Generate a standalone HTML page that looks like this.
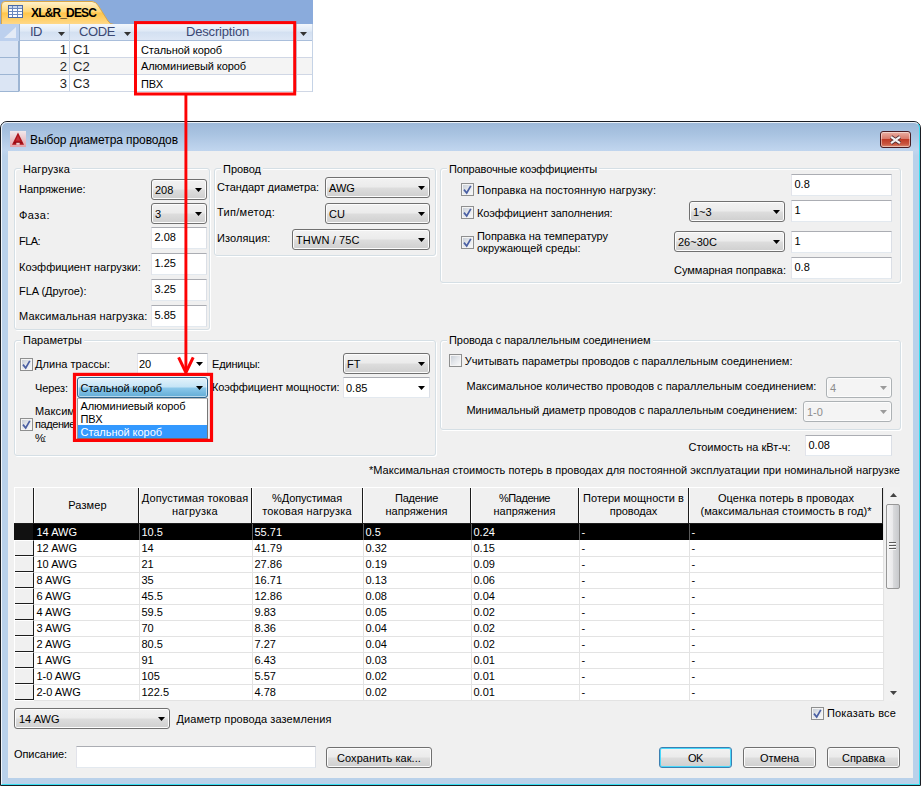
<!DOCTYPE html>
<html lang="ru"><head><meta charset="utf-8"><title>Выбор диаметра проводов</title>
<style>
html,body{margin:0;padding:0;background:#fff;}
body{width:921px;height:786px;position:relative;overflow:hidden;font-family:"Liberation Sans",sans-serif;font-size:11px;}
div,span.t,div.t{position:absolute;box-sizing:border-box;}
.t{white-space:nowrap;}
.t span{position:static;}
#acc{left:0;top:0;width:313px;height:92px;}
.acbar{background:#8aabdc;}
.achd{background:linear-gradient(#f3f7fc,#dfe9f6 45%,#d3e0f1 50%,#dde7f5);border-bottom:1px solid #a9bedb;}
.acrow{border-bottom:1px solid #d0d7e5;}
.acsel{background:#dbe5f4;border-right:1px solid #9db5d3;border-bottom:1px solid #9db5d3;}
#win{left:0;top:121px;width:921px;height:665px;border-radius:7px 7px 0 0;background:linear-gradient(#9cb8d8 0,#a9c3e1 12px,#c0d5ee 28px,#b9d1ea 34px,#b9d1ea 100%);border:1px solid #1a1e24;}
#winin{left:0;top:0;right:0;bottom:0;border-radius:6px 6px 0 0;border:1px solid rgba(255,255,255,.8);border-right-color:#37dff2;border-bottom-color:#37dff2;}
.client{background:#f0f0f0;}
.close{left:880px;top:131px;width:31px;height:17px;border-radius:3px;background:linear-gradient(#e9b0a4,#d9796a 46%,#bf3b26 50%,#c9553f 80%,#dc8a70);border:1px solid #4a1c22;box-shadow:inset 0 0 0 1px rgba(255,255,255,.45);}
.gb{border:1px solid #d5dfe5;border-radius:3px;box-shadow:inset 1px 1px 0 #fff, 1px 1px 0 #fff;}
.cb{border:1px solid #707070;border-radius:3px;background:linear-gradient(#f2f2f2,#ebebeb 48%,#dddddd 52%,#cfcfcf);box-shadow:inset 0 0 0 1px #fcfcfc;}
.cb.cd{border-color:#adb2b5;background:#f4f4f4;}
.cb.cf{border-color:#2c628b;background:linear-gradient(#e3f2fb,#c4e4f6 48%,#8cc8ea 52%,#62acd6);box-shadow:inset 0 0 0 1px rgba(255,255,255,.55);}
.ce{border:1px solid #e3e9ef;border-top-color:#abadb3;border-left-color:#e2e3ea;border-right-color:#dbdfe6;background:#fff;}
.ar{position:absolute;right:4px;top:50%;margin-top:-2px;}
.ed{border:1px solid #e3e9ef;border-top-color:#abadb3;border-left-color:#e2e3ea;border-right-color:#dbdfe6;background:#fff;}
.ck{border:1px solid #8e8f8f;background:linear-gradient(135deg,#c3cad3,#e4e7eb 50%,#fbfbfb);box-shadow:inset 0 0 0 1px #f4f4f4;}
.ck svg{position:absolute;left:-1px;top:-1px;}
.dd{border:1px solid #777;border-top-color:#bbb;border-left-color:#999;background:#fff;}
.bt{border:1px solid #707070;border-radius:3px;background:linear-gradient(#f2f2f2,#ebebeb 48%,#dddddd 52%,#cfcfcf);box-shadow:inset 0 0 0 1px #fcfcfc;}
.bt.bd{border-color:#3c7fb1;box-shadow:inset 0 0 0 1px #48d8fb;}
.grid{background:#fff;}
.ghd{background:#f0f0f0;}
.rh{background:#f0f0f0;border-right:1px solid #1c1c1c;border-bottom:1px solid #1c1c1c;border-top:1px solid #fff;}
.sb{background:#f1f1f1;}
.sbt{border:1px solid #979797;border-radius:2px;background:linear-gradient(90deg,#f5f5f5,#e9e9eb 48%,#d9dadc 52%,#c7c9cc);}
</style></head>
<body>
<div class="acbar" style="left:0px;top:0px;width:313px;height:24px;"></div>
<svg style="position:absolute;left:0;top:0" width="120" height="25" viewBox="0 0 120 25">
<defs><linearGradient id="tg" x1="0" y1="0" x2="0" y2="1"><stop offset="0" stop-color="#fff3cf"/><stop offset="0.45" stop-color="#ffd675"/><stop offset="0.5" stop-color="#ffc64a"/><stop offset="1" stop-color="#ffd98a"/></linearGradient></defs>
<path d="M1.5 24.5V5q0-3.5 3.5-3.5H92q4 0 6.5 4.5L108 21q2 3.500 6 3.500z" fill="url(#tg)" stroke="#d9a74a" stroke-width="1"/></svg>
<svg style="position:absolute;left:8px;top:5px" width="15" height="13" viewBox="0 0 15 13"><rect x="0.5" y="0.5" width="14" height="12" fill="#fdfdfe" stroke="#4a6aa5"/><rect x="1" y="1" width="13" height="2.5" fill="#c9d6ec"/><path d="M1 3.5h13M1 6.5h13M1 9.5h13M4.500 1v11M9.500 1v11" stroke="#6b88bd" stroke-width="1"/></svg>
<span class="t" id="t0" style="top:5.0px;font-size:12px;line-height:16px;color:#000;font-weight:bold;letter-spacing:-0.854px;left:31px;">XL&amp;R_DESC</span>
<div class="achd" style="left:0px;top:24px;width:313px;height:17px;"></div>
<svg style="position:absolute;left:0;top:24px" width="20" height="17" viewBox="0 0 20 17"><rect width="19" height="17" fill="#bcd0ee"/><path d="M16 3v11H4z" fill="#e4ebf6"/><path d="M19.500 0v17" stroke="#9db5d3"/></svg>
<div class="acrow" style="left:0px;top:41px;width:313px;height:17px;background:#fff;"></div>
<div class="acsel" style="left:0px;top:41px;width:19px;height:17px;"></div>
<div class="acrow" style="left:0px;top:58px;width:313px;height:17px;background:#f4f4f4;"></div>
<div class="acsel" style="left:0px;top:58px;width:19px;height:17px;"></div>
<div class="acrow" style="left:0px;top:75px;width:313px;height:17px;background:#fff;"></div>
<div class="acsel" style="left:0px;top:75px;width:19px;height:17px;"></div>
<div class="" style="left:69px;top:24px;width:1px;height:67px;position:absolute;background:#c5d3e6;"></div>
<div class="" style="left:136px;top:24px;width:1px;height:67px;position:absolute;background:#c5d3e6;"></div>
<div class="" style="left:296px;top:24px;width:1px;height:67px;position:absolute;background:#c5d3e6;"></div>
<div class="" style="left:19px;top:24px;width:1px;height:67px;position:absolute;background:#9db5d3;"></div>
<div class="" style="left:312px;top:24px;width:1px;height:68px;position:absolute;background:#c5d3e6;"></div>
<span class="t" id="t1" style="top:24.0px;font-size:13px;line-height:16px;color:#3b4874;letter-spacing:-0.500px;left:30px;">ID</span>
<span class="t" id="t2" style="top:24.0px;font-size:13px;line-height:16px;color:#3b4874;letter-spacing:-0.391px;left:79px;">CODE</span>
<span class="t" id="t3" style="top:24.0px;font-size:13px;line-height:16px;color:#3b4874;letter-spacing:-0.185px;left:186px;">Description</span>
<svg style="position:absolute;left:58px;top:32px" width="7" height="4" viewBox="0 0 7 4"><path d="M0 0h7L3.500 4z" fill="#333"/></svg>
<svg style="position:absolute;left:124px;top:32px" width="7" height="4" viewBox="0 0 7 4"><path d="M0 0h7L3.500 4z" fill="#333"/></svg>
<svg style="position:absolute;left:300px;top:32px" width="7" height="4" viewBox="0 0 7 4"><path d="M0 0h7L3.500 4z" fill="#333"/></svg>
<span class="t" id="t4" style="top:42.0px;font-size:13px;line-height:16px;color:#222;right:854px;">1</span>
<span class="t" id="t5" style="top:42.0px;font-size:13px;line-height:16px;color:#222;left:73px;">C1</span>
<span class="t" id="t6" style="top:42.0px;font-size:11px;line-height:16px;color:#000;letter-spacing:-0.079px;left:141px;">Стальной короб</span>
<span class="t" id="t7" style="top:59.0px;font-size:13px;line-height:16px;color:#222;right:854px;">2</span>
<span class="t" id="t8" style="top:59.0px;font-size:13px;line-height:16px;color:#222;left:73px;">C2</span>
<span class="t" id="t9" style="top:58.0px;font-size:11px;line-height:16px;color:#000;letter-spacing:-0.086px;left:141px;">Алюминиевый короб</span>
<span class="t" id="t10" style="top:76.0px;font-size:13px;line-height:16px;color:#222;right:854px;">3</span>
<span class="t" id="t11" style="top:76.0px;font-size:13px;line-height:16px;color:#222;left:73px;">C3</span>
<span class="t" id="t12" style="top:76.0px;font-size:11px;line-height:16px;color:#000;letter-spacing:-0.036px;left:141px;">ПВХ</span>
<div id="win"><div id="winin"></div></div>
<div class="client" style="left:8px;top:151px;width:905px;height:627px;"></div>
<svg style="position:absolute;left:10px;top:131px" width="16" height="16" viewBox="0 0 16 16"><defs><linearGradient id="ig" x1="0" y1="0" x2="0" y2="1"><stop offset="0" stop-color="#f1e9ec"/><stop offset="1" stop-color="#e3a3aa"/></linearGradient></defs><rect width="16" height="16" fill="url(#ig)"/><path d="M8 1.600L14 13.800H2z" fill="#ad121a"/><path d="M8 4.500L10.300 9.800H5.700z" fill="#c4323a"/><path d="M4 11h8l.5 1h-9z" fill="#8f0e15"/><rect x="6.300" y="11.800" width="3.400" height="2" fill="#ecd3d6"/></svg>
<span class="t" id="t13" style="top:131.5px;font-size:12px;line-height:16px;color:#000;letter-spacing:-0.079px;left:30px;">Выбор диаметра проводов</span>
<div class="close"><svg width="13" height="10" viewBox="0 0 13 10" style="position:absolute;left:8px;top:2.500px"><path d="M2 1.800L11 8.200M11 1.800L2 8.200" stroke="#4d2b30" stroke-width="3.800" stroke-linecap="butt"/><path d="M2 1.800L11 8.200M11 1.800L2 8.200" stroke="#f4f4f4" stroke-width="2.200" stroke-linecap="butt"/></svg></div>
<div class="gb" style="left:14px;top:168px;width:196px;height:162px;"></div>
<span class="t" id="t14" style="top:161.5px;font-size:11px;line-height:14px;color:#000;letter-spacing:0.150px;left:23px;background:#f0f0f0;padding:0 2px;margin-left:-2px;">Нагрузка</span>
<span class="t" id="t15" style="top:182.0px;font-size:11px;line-height:14px;color:#000;letter-spacing:-0.031px;left:19px;">Напряжение:</span>
<div class="cb" style="left:151px;top:179px;width:56px;height:21px;"><svg class="ar" width="7" height="4" viewBox="0 0 7 4"><path d="M0 0h7L3.5 4z" fill="#000"/></svg></div>
<span class="t" id="t16" style="top:182.5px;font-size:11px;line-height:14px;color:#000;left:155px;">208</span>
<span class="t" id="t17" style="top:208.0px;font-size:11px;line-height:14px;color:#000;letter-spacing:0.484px;left:19px;">Фаза:</span>
<div class="cb" style="left:151px;top:203px;width:56px;height:21px;"><svg class="ar" width="7" height="4" viewBox="0 0 7 4"><path d="M0 0h7L3.5 4z" fill="#000"/></svg></div>
<span class="t" id="t18" style="top:206.5px;font-size:11px;line-height:14px;color:#000;left:155px;">3</span>
<span class="t" id="t19" style="top:234.0px;font-size:11px;line-height:14px;color:#000;letter-spacing:-0.559px;left:19px;">FLA:</span>
<div class="ed" style="left:151px;top:227px;width:56px;height:22px;"></div>
<span class="t" id="t20" style="top:229.5px;font-size:11px;line-height:14px;color:#000;left:154.5px;">2.08</span>
<span class="t" id="t21" style="top:260.0px;font-size:11px;line-height:14px;color:#000;letter-spacing:-0.008px;left:19px;">Коэффициент нагрузки:</span>
<div class="ed" style="left:151px;top:253px;width:56px;height:22px;"></div>
<span class="t" id="t22" style="top:255.5px;font-size:11px;line-height:14px;color:#000;left:154.5px;">1.25</span>
<span class="t" id="t23" style="top:284.0px;font-size:11px;line-height:14px;color:#000;letter-spacing:-0.036px;left:19px;">FLA (Другое):</span>
<div class="ed" style="left:151px;top:279px;width:56px;height:22px;"></div>
<span class="t" id="t24" style="top:281.5px;font-size:11px;line-height:14px;color:#000;left:154.5px;">3.25</span>
<span class="t" id="t25" style="top:309.0px;font-size:11px;line-height:14px;color:#000;letter-spacing:0.114px;left:19px;">Максимальная нагрузка:</span>
<div class="ed" style="left:151px;top:305px;width:56px;height:22px;"></div>
<span class="t" id="t26" style="top:307.5px;font-size:11px;line-height:14px;color:#000;left:154.5px;">5.85</span>
<div class="gb" style="left:214px;top:168px;width:222px;height:88px;"></div>
<span class="t" id="t27" style="top:161.5px;font-size:11px;line-height:14px;color:#000;letter-spacing:-0.026px;left:223px;background:#f0f0f0;padding:0 2px;margin-left:-2px;">Провод</span>
<span class="t" id="t28" style="top:180.0px;font-size:11px;line-height:14px;color:#000;letter-spacing:-0.105px;left:217px;">Стандарт диаметра:</span>
<div class="cb" style="left:325px;top:177px;width:105px;height:21px;"><svg class="ar" width="7" height="4" viewBox="0 0 7 4"><path d="M0 0h7L3.5 4z" fill="#000"/></svg></div>
<span class="t" id="t29" style="top:180.5px;font-size:11px;line-height:14px;color:#000;left:329px;">AWG</span>
<span class="t" id="t30" style="top:205.0px;font-size:11px;line-height:14px;color:#000;letter-spacing:0.302px;left:217px;">Тип/метод:</span>
<div class="cb" style="left:325px;top:203px;width:105px;height:21px;"><svg class="ar" width="7" height="4" viewBox="0 0 7 4"><path d="M0 0h7L3.5 4z" fill="#000"/></svg></div>
<span class="t" id="t31" style="top:206.5px;font-size:11px;line-height:14px;color:#000;left:329px;">CU</span>
<span class="t" id="t32" style="top:231.0px;font-size:11px;line-height:14px;color:#000;letter-spacing:0.106px;left:217px;">Изоляция:</span>
<div class="cb" style="left:292px;top:229px;width:138px;height:21px;"><svg class="ar" width="7" height="4" viewBox="0 0 7 4"><path d="M0 0h7L3.5 4z" fill="#000"/></svg></div>
<span class="t" id="t33" style="top:232.5px;font-size:11px;line-height:14px;color:#000;letter-spacing:0.116px;left:296px;">THWN / 75C</span>
<div class="gb" style="left:440px;top:168px;width:461px;height:115px;"></div>
<span class="t" id="t34" style="top:161.5px;font-size:11px;line-height:14px;color:#000;letter-spacing:-0.133px;left:449px;background:#f0f0f0;padding:0 2px;margin-left:-2px;">Поправочные коэффициенты</span>
<div class="ck" style="left:461px;top:183.0px;width:13px;height:13.0px;"><svg width="13" height="13" viewBox="0 0 13 13"><path d="M3 6.6L5.7 10L9.8 2.8" stroke="#4a5fa3" stroke-width="1.7" fill="none"/></svg></div>
<span class="t" id="t35" style="top:182.5px;font-size:11px;line-height:14px;color:#000;letter-spacing:0.053px;left:477px;">Поправка на постоянную нагрузку:</span>
<div class="ed" style="left:791px;top:174px;width:101px;height:22px;"></div>
<span class="t" id="t36" style="top:176.5px;font-size:11px;line-height:14px;color:#000;left:794.5px;">0.8</span>
<div class="ck" style="left:461px;top:206.0px;width:13px;height:13.0px;"><svg width="13" height="13" viewBox="0 0 13 13"><path d="M3 6.6L5.7 10L9.8 2.8" stroke="#4a5fa3" stroke-width="1.7" fill="none"/></svg></div>
<span class="t" id="t37" style="top:206.0px;font-size:11px;line-height:14px;color:#000;letter-spacing:-0.107px;left:477px;">Коэффициент заполнения:</span>
<div class="cb" style="left:689px;top:201px;width:96px;height:21px;"><svg class="ar" width="7" height="4" viewBox="0 0 7 4"><path d="M0 0h7L3.5 4z" fill="#000"/></svg></div>
<span class="t" id="t38" style="top:204.5px;font-size:11px;line-height:14px;color:#000;left:693px;">1~3</span>
<div class="ed" style="left:791px;top:200px;width:101px;height:22px;"></div>
<span class="t" id="t39" style="top:202.5px;font-size:11px;line-height:14px;color:#000;left:794.5px;">1</span>
<div class="ck" style="left:461px;top:236.0px;width:13px;height:13.0px;"><svg width="13" height="13" viewBox="0 0 13 13"><path d="M3 6.6L5.7 10L9.8 2.8" stroke="#4a5fa3" stroke-width="1.7" fill="none"/></svg></div>
<span class="t" id="t40" style="top:228.7px;font-size:11px;line-height:14px;color:#000;letter-spacing:-0.054px;left:477px;">Поправка на температуру</span>
<span class="t" id="t41" style="top:241.0px;font-size:11px;line-height:14px;color:#000;letter-spacing:0.006px;left:477px;">окружающей среды:</span>
<div class="cb" style="left:674px;top:231px;width:111px;height:21px;"><svg class="ar" width="7" height="4" viewBox="0 0 7 4"><path d="M0 0h7L3.5 4z" fill="#000"/></svg></div>
<span class="t" id="t42" style="top:234.5px;font-size:11px;line-height:14px;color:#000;left:678px;">26~30C</span>
<div class="ed" style="left:791px;top:231px;width:101px;height:22px;"></div>
<span class="t" id="t43" style="top:233.5px;font-size:11px;line-height:14px;color:#000;left:794.5px;">1</span>
<span class="t" id="t44" style="top:262.5px;font-size:11px;line-height:14px;color:#000;letter-spacing:-0.012px;left:674px;">Суммарная поправка:</span>
<div class="ed" style="left:791px;top:257px;width:101px;height:22px;"></div>
<span class="t" id="t45" style="top:259.5px;font-size:11px;line-height:14px;color:#000;left:794.5px;">0.8</span>
<div class="gb" style="left:14px;top:340px;width:422px;height:116px;"></div>
<span class="t" id="t46" style="top:333.0px;font-size:11px;line-height:14px;color:#000;letter-spacing:0.040px;left:23px;background:#f0f0f0;padding:0 2px;margin-left:-2px;">Параметры</span>
<div class="ck" style="left:20px;top:358.0px;width:13px;height:13.0px;"><svg width="13" height="13" viewBox="0 0 13 13"><path d="M3 6.6L5.7 10L9.8 2.8" stroke="#4a5fa3" stroke-width="1.7" fill="none"/></svg></div>
<span class="t" id="t47" style="top:356.7px;font-size:11px;line-height:14px;color:#000;letter-spacing:0.038px;left:35px;">Длина трассы:</span>
<div class="ce" style="left:137px;top:353px;width:71px;height:21px;"><svg class="ar" width="7" height="4" viewBox="0 0 7 4"><path d="M0 0h7L3.5 4z" fill="#000"/></svg></div>
<span class="t" id="t48" style="top:356.5px;font-size:11px;line-height:14px;color:#000;left:139px;">20</span>
<span class="t" id="t49" style="top:357.0px;font-size:11px;line-height:14px;color:#000;letter-spacing:-0.174px;left:212px;">Единицы:</span>
<div class="cb" style="left:343px;top:353px;width:87px;height:21px;"><svg class="ar" width="7" height="4" viewBox="0 0 7 4"><path d="M0 0h7L3.5 4z" fill="#000"/></svg></div>
<span class="t" id="t50" style="top:356.5px;font-size:11px;line-height:14px;color:#000;left:347px;">FT</span>
<span class="t" id="t51" style="top:380.5px;font-size:11px;line-height:14px;color:#000;letter-spacing:-0.091px;left:35px;">Через:</span>
<div class="cb cf" style="left:77px;top:377px;width:131px;height:21px;"><svg class="ar" width="7" height="4" viewBox="0 0 7 4"><path d="M0 0h7L3.5 4z" fill="#000"/></svg></div>
<span class="t" id="t52" style="top:380.5px;font-size:11px;line-height:14px;color:#000;letter-spacing:-0.044px;left:80.5px;">Стальной короб</span>
<span class="t" id="t53" style="top:380.0px;font-size:11px;line-height:14px;color:#000;letter-spacing:-0.109px;left:212px;">Коэффициент мощности:</span>
<div class="ce" style="left:343px;top:377px;width:87px;height:21px;"><svg class="ar" width="7" height="4" viewBox="0 0 7 4"><path d="M0 0h7L3.5 4z" fill="#000"/></svg></div>
<span class="t" id="t54" style="top:380.5px;font-size:11px;line-height:14px;color:#000;left:346px;">0.85</span>
<span class="t" id="t55" style="top:403.5px;font-size:11px;line-height:14px;color:#000;letter-spacing:0.073px;left:35px;">Максим</span>
<span class="t" id="t56" style="top:417.0px;font-size:11px;line-height:14px;color:#000;letter-spacing:-0.422px;left:35px;">падение</span>
<span class="t" id="t57" style="top:430.5px;font-size:11px;line-height:14px;color:#000;letter-spacing:-1.422px;left:35px;">%:</span>
<div class="ck" style="left:20px;top:418.0px;width:13px;height:13.0px;"><svg width="13" height="13" viewBox="0 0 13 13"><path d="M3 6.6L5.7 10L9.8 2.8" stroke="#4a5fa3" stroke-width="1.7" fill="none"/></svg></div>
<div class="dd" style="left:77px;top:398px;width:131px;height:41px;"></div>
<span class="t" id="t58" style="top:398.5px;font-size:11px;line-height:14px;color:#000;letter-spacing:-0.086px;left:80.5px;">Алюминиевый короб</span>
<span class="t" id="t59" style="top:411.5px;font-size:11px;line-height:14px;color:#000;letter-spacing:-0.036px;left:80.5px;">ПВХ</span>
<div class="" style="left:78px;top:425px;width:129px;height:13px;position:absolute;background:#3399ff;"></div>
<span class="t" id="t60" style="top:425.0px;font-size:11px;line-height:14px;color:#fff;letter-spacing:-0.044px;left:80.5px;">Стальной короб</span>
<div class="gb" style="left:440px;top:340px;width:461px;height:90px;"></div>
<span class="t" id="t61" style="top:333.0px;font-size:11px;line-height:14px;color:#000;letter-spacing:-0.068px;left:449px;background:#f0f0f0;padding:0 2px;margin-left:-2px;">Провода с параллельным соединением</span>
<div class="ck" style="left:449px;top:354.0px;width:13px;height:13.0px;"></div>
<span class="t" id="t62" style="top:354.3px;font-size:11px;line-height:14px;color:#000;letter-spacing:-0.001px;left:464.8px;">Учитывать параметры проводов с параллельным соединением:</span>
<span class="t" id="t63" style="top:379.0px;font-size:11px;line-height:14px;color:#000;letter-spacing:-0.010px;left:466.4px;">Максимальное количество проводов с параллельным соединением:</span>
<div class="cb cd" style="left:826px;top:377px;width:66px;height:21px;"><svg class="ar" width="7" height="4" viewBox="0 0 7 4"><path d="M0 0h7L3.5 4z" fill="#9a9a9a"/></svg></div>
<span class="t" id="t64" style="top:380.5px;font-size:11px;line-height:14px;color:#8c8c8c;left:830px;">4</span>
<span class="t" id="t65" style="top:403.0px;font-size:11px;line-height:14px;color:#000;letter-spacing:-0.045px;left:466.4px;">Минимальный диаметр проводов с параллельным соединением:</span>
<div class="cb cd" style="left:803px;top:401px;width:89px;height:21px;"><svg class="ar" width="7" height="4" viewBox="0 0 7 4"><path d="M0 0h7L3.5 4z" fill="#9a9a9a"/></svg></div>
<span class="t" id="t66" style="top:404.5px;font-size:11px;line-height:14px;color:#8c8c8c;left:807px;">1-0</span>
<span class="t" id="t67" style="top:439.5px;font-size:11px;line-height:14px;color:#000;letter-spacing:-0.035px;left:688.5px;">Стоимость на кВт-ч:</span>
<div class="ed" style="left:805px;top:435px;width:87px;height:21px;"></div>
<span class="t" id="t68" style="top:437.5px;font-size:11px;line-height:14px;color:#000;left:808.5px;">0.08</span>
<span class="t" id="t69" style="top:463.0px;font-size:11px;line-height:14px;color:#000;letter-spacing:0.016px;right:21px;">*Максимальная стоимость потерь в проводах для постоянной эксплуатации при номинальной нагрузке</span>
<div class="grid" style="left:14px;top:487px;width:869px;height:214px;"></div>
<div class="ghd" style="left:14px;top:487px;width:869px;height:37px;"></div>
<div class="" style="left:139px;top:524px;width:1px;height:177px;position:absolute;background:#e3e3e3;"></div>
<div class="" style="left:252px;top:524px;width:1px;height:177px;position:absolute;background:#e3e3e3;"></div>
<div class="" style="left:363px;top:524px;width:1px;height:177px;position:absolute;background:#e3e3e3;"></div>
<div class="" style="left:471px;top:524px;width:1px;height:177px;position:absolute;background:#e3e3e3;"></div>
<div class="" style="left:579px;top:524px;width:1px;height:177px;position:absolute;background:#e3e3e3;"></div>
<div class="" style="left:689px;top:524px;width:1px;height:177px;position:absolute;background:#e3e3e3;"></div>
<div class="" style="left:883px;top:487px;width:1px;height:214px;position:absolute;background:#e3e3e3;"></div>
<div class="" style="left:34px;top:556px;width:850px;height:1px;position:absolute;background:#e3e3e3;"></div>
<div class="" style="left:34px;top:572px;width:850px;height:1px;position:absolute;background:#e3e3e3;"></div>
<div class="" style="left:34px;top:588px;width:850px;height:1px;position:absolute;background:#e3e3e3;"></div>
<div class="" style="left:34px;top:604px;width:850px;height:1px;position:absolute;background:#e3e3e3;"></div>
<div class="" style="left:34px;top:620px;width:850px;height:1px;position:absolute;background:#e3e3e3;"></div>
<div class="" style="left:34px;top:636px;width:850px;height:1px;position:absolute;background:#e3e3e3;"></div>
<div class="" style="left:34px;top:652px;width:850px;height:1px;position:absolute;background:#e3e3e3;"></div>
<div class="" style="left:34px;top:668px;width:850px;height:1px;position:absolute;background:#e3e3e3;"></div>
<div class="" style="left:34px;top:684px;width:850px;height:1px;position:absolute;background:#e3e3e3;"></div>
<div class="" style="left:34px;top:700px;width:850px;height:1px;position:absolute;background:#e3e3e3;"></div>
<div class="" style="left:33px;top:488px;width:1px;height:35px;position:absolute;background:#1c1c1c;"></div>
<div class="" style="left:34px;top:488px;width:1px;height:35px;position:absolute;background:#fff;"></div>
<div class="" style="left:138px;top:488px;width:1px;height:35px;position:absolute;background:#1c1c1c;"></div>
<div class="" style="left:139px;top:488px;width:1px;height:35px;position:absolute;background:#fff;"></div>
<div class="" style="left:251px;top:488px;width:1px;height:35px;position:absolute;background:#1c1c1c;"></div>
<div class="" style="left:252px;top:488px;width:1px;height:35px;position:absolute;background:#fff;"></div>
<div class="" style="left:362px;top:488px;width:1px;height:35px;position:absolute;background:#1c1c1c;"></div>
<div class="" style="left:363px;top:488px;width:1px;height:35px;position:absolute;background:#fff;"></div>
<div class="" style="left:470px;top:488px;width:1px;height:35px;position:absolute;background:#1c1c1c;"></div>
<div class="" style="left:471px;top:488px;width:1px;height:35px;position:absolute;background:#fff;"></div>
<div class="" style="left:578px;top:488px;width:1px;height:35px;position:absolute;background:#1c1c1c;"></div>
<div class="" style="left:579px;top:488px;width:1px;height:35px;position:absolute;background:#fff;"></div>
<div class="" style="left:688px;top:488px;width:1px;height:35px;position:absolute;background:#1c1c1c;"></div>
<div class="" style="left:689px;top:488px;width:1px;height:35px;position:absolute;background:#fff;"></div>
<div class="" style="left:882px;top:488px;width:1px;height:35px;position:absolute;background:#1c1c1c;"></div>
<div class="" style="left:14px;top:487px;width:869px;height:1px;position:absolute;background:#fff;"></div>
<div class="" style="left:14px;top:487px;width:1px;height:214px;position:absolute;background:#fff;"></div>
<div class="" style="left:14px;top:523px;width:869px;height:1px;position:absolute;background:#1c1c1c;"></div>
<div class="t" style="top:498.0px;font-size:11px;line-height:14px;color:#000;letter-spacing:0.115px;left:-112.5px;width:400px;text-align:center;"><span id="t70">Размер</span></div>
<div class="t" style="top:491.3px;font-size:11px;line-height:14px;color:#000;letter-spacing:0.123px;left:-5.0px;width:400px;text-align:center;"><span id="t71">Допустимая токовая</span></div>
<div class="t" style="top:504.0px;font-size:11px;line-height:14px;color:#000;letter-spacing:0.260px;left:-5.0px;width:400px;text-align:center;"><span id="t72">нагрузка</span></div>
<div class="t" style="top:491.3px;font-size:11px;line-height:14px;color:#000;letter-spacing:-0.102px;left:107.0px;width:400px;text-align:center;"><span id="t73">%Допустимая</span></div>
<div class="t" style="top:504.0px;font-size:11px;line-height:14px;color:#000;letter-spacing:0.165px;left:107.0px;width:400px;text-align:center;"><span id="t74">токовая нагрузка</span></div>
<div class="t" style="top:491.3px;font-size:11px;line-height:14px;color:#000;letter-spacing:-0.272px;left:216.5px;width:400px;text-align:center;"><span id="t75">Падение</span></div>
<div class="t" style="top:504.0px;font-size:11px;line-height:14px;color:#000;letter-spacing:0.023px;left:216.5px;width:400px;text-align:center;"><span id="t76">напряжения</span></div>
<div class="t" style="top:491.3px;font-size:11px;line-height:14px;color:#000;letter-spacing:-0.461px;left:324.5px;width:400px;text-align:center;"><span id="t77">%Падение</span></div>
<div class="t" style="top:504.0px;font-size:11px;line-height:14px;color:#000;letter-spacing:0.023px;left:324.5px;width:400px;text-align:center;"><span id="t78">напряжения</span></div>
<div class="t" style="top:491.3px;font-size:11px;line-height:14px;color:#000;letter-spacing:0.009px;left:433.5px;width:400px;text-align:center;"><span id="t79">Потери мощности в</span></div>
<div class="t" style="top:504.0px;font-size:11px;line-height:14px;color:#000;letter-spacing:-0.029px;left:433.5px;width:400px;text-align:center;"><span id="t80">проводах</span></div>
<div class="t" style="top:491.3px;font-size:11px;line-height:14px;color:#000;letter-spacing:0.014px;left:586.0px;width:400px;text-align:center;"><span id="t81">Оценка потерь в проводах</span></div>
<div class="t" style="top:504.0px;font-size:11px;line-height:14px;color:#000;letter-spacing:0.046px;left:586.0px;width:400px;text-align:center;"><span id="t82">(максимальная стоимость в год)*</span></div>
<div class="" style="left:14px;top:524px;width:869px;height:16px;position:absolute;background:#000;"></div>
<div class="" style="left:14px;top:524px;width:19px;height:16px;position:absolute;background:#111;"></div>
<div class="" style="left:139px;top:524px;width:1px;height:16px;position:absolute;background:#5a5a5a;"></div>
<div class="" style="left:252px;top:524px;width:1px;height:16px;position:absolute;background:#5a5a5a;"></div>
<div class="" style="left:363px;top:524px;width:1px;height:16px;position:absolute;background:#5a5a5a;"></div>
<div class="" style="left:471px;top:524px;width:1px;height:16px;position:absolute;background:#5a5a5a;"></div>
<div class="" style="left:579px;top:524px;width:1px;height:16px;position:absolute;background:#5a5a5a;"></div>
<div class="" style="left:689px;top:524px;width:1px;height:16px;position:absolute;background:#5a5a5a;"></div>
<span class="t" id="t83" style="top:525.0px;font-size:11px;line-height:14px;color:#fff;left:36.5px;">14 AWG</span>
<span class="t" id="t84" style="top:525.0px;font-size:11px;line-height:14px;color:#fff;left:141.5px;">10.5</span>
<span class="t" id="t85" style="top:525.0px;font-size:11px;line-height:14px;color:#fff;left:254.5px;">55.71</span>
<span class="t" id="t86" style="top:525.0px;font-size:11px;line-height:14px;color:#fff;left:365.5px;">0.5</span>
<span class="t" id="t87" style="top:525.0px;font-size:11px;line-height:14px;color:#fff;left:473.5px;">0.24</span>
<span class="t" id="t88" style="top:525.0px;font-size:11px;line-height:14px;color:#fff;left:581.5px;">-</span>
<span class="t" id="t89" style="top:525.0px;font-size:11px;line-height:14px;color:#fff;left:691.5px;">-</span>
<div class="rh" style="left:15px;top:540px;width:19px;height:16px;"></div>
<span class="t" id="t90" style="top:541.0px;font-size:11px;line-height:14px;color:#000;left:36.5px;">12 AWG</span>
<span class="t" id="t91" style="top:541.0px;font-size:11px;line-height:14px;color:#000;left:141.5px;">14</span>
<span class="t" id="t92" style="top:541.0px;font-size:11px;line-height:14px;color:#000;left:254.5px;">41.79</span>
<span class="t" id="t93" style="top:541.0px;font-size:11px;line-height:14px;color:#000;left:365.5px;">0.32</span>
<span class="t" id="t94" style="top:541.0px;font-size:11px;line-height:14px;color:#000;left:473.5px;">0.15</span>
<span class="t" id="t95" style="top:541.0px;font-size:11px;line-height:14px;color:#000;left:581.5px;">-</span>
<span class="t" id="t96" style="top:541.0px;font-size:11px;line-height:14px;color:#000;left:691.5px;">-</span>
<div class="rh" style="left:15px;top:556px;width:19px;height:16px;"></div>
<span class="t" id="t97" style="top:557.0px;font-size:11px;line-height:14px;color:#000;left:36.5px;">10 AWG</span>
<span class="t" id="t98" style="top:557.0px;font-size:11px;line-height:14px;color:#000;left:141.5px;">21</span>
<span class="t" id="t99" style="top:557.0px;font-size:11px;line-height:14px;color:#000;left:254.5px;">27.86</span>
<span class="t" id="t100" style="top:557.0px;font-size:11px;line-height:14px;color:#000;left:365.5px;">0.19</span>
<span class="t" id="t101" style="top:557.0px;font-size:11px;line-height:14px;color:#000;left:473.5px;">0.09</span>
<span class="t" id="t102" style="top:557.0px;font-size:11px;line-height:14px;color:#000;left:581.5px;">-</span>
<span class="t" id="t103" style="top:557.0px;font-size:11px;line-height:14px;color:#000;left:691.5px;">-</span>
<div class="rh" style="left:15px;top:572px;width:19px;height:16px;"></div>
<span class="t" id="t104" style="top:573.0px;font-size:11px;line-height:14px;color:#000;left:36.5px;">8 AWG</span>
<span class="t" id="t105" style="top:573.0px;font-size:11px;line-height:14px;color:#000;left:141.5px;">35</span>
<span class="t" id="t106" style="top:573.0px;font-size:11px;line-height:14px;color:#000;left:254.5px;">16.71</span>
<span class="t" id="t107" style="top:573.0px;font-size:11px;line-height:14px;color:#000;left:365.5px;">0.13</span>
<span class="t" id="t108" style="top:573.0px;font-size:11px;line-height:14px;color:#000;left:473.5px;">0.06</span>
<span class="t" id="t109" style="top:573.0px;font-size:11px;line-height:14px;color:#000;left:581.5px;">-</span>
<span class="t" id="t110" style="top:573.0px;font-size:11px;line-height:14px;color:#000;left:691.5px;">-</span>
<div class="rh" style="left:15px;top:588px;width:19px;height:16px;"></div>
<span class="t" id="t111" style="top:589.0px;font-size:11px;line-height:14px;color:#000;left:36.5px;">6 AWG</span>
<span class="t" id="t112" style="top:589.0px;font-size:11px;line-height:14px;color:#000;left:141.5px;">45.5</span>
<span class="t" id="t113" style="top:589.0px;font-size:11px;line-height:14px;color:#000;left:254.5px;">12.86</span>
<span class="t" id="t114" style="top:589.0px;font-size:11px;line-height:14px;color:#000;left:365.5px;">0.08</span>
<span class="t" id="t115" style="top:589.0px;font-size:11px;line-height:14px;color:#000;left:473.5px;">0.04</span>
<span class="t" id="t116" style="top:589.0px;font-size:11px;line-height:14px;color:#000;left:581.5px;">-</span>
<span class="t" id="t117" style="top:589.0px;font-size:11px;line-height:14px;color:#000;left:691.5px;">-</span>
<div class="rh" style="left:15px;top:604px;width:19px;height:16px;"></div>
<span class="t" id="t118" style="top:605.0px;font-size:11px;line-height:14px;color:#000;left:36.5px;">4 AWG</span>
<span class="t" id="t119" style="top:605.0px;font-size:11px;line-height:14px;color:#000;left:141.5px;">59.5</span>
<span class="t" id="t120" style="top:605.0px;font-size:11px;line-height:14px;color:#000;left:254.5px;">9.83</span>
<span class="t" id="t121" style="top:605.0px;font-size:11px;line-height:14px;color:#000;left:365.5px;">0.05</span>
<span class="t" id="t122" style="top:605.0px;font-size:11px;line-height:14px;color:#000;left:473.5px;">0.02</span>
<span class="t" id="t123" style="top:605.0px;font-size:11px;line-height:14px;color:#000;left:581.5px;">-</span>
<span class="t" id="t124" style="top:605.0px;font-size:11px;line-height:14px;color:#000;left:691.5px;">-</span>
<div class="rh" style="left:15px;top:620px;width:19px;height:16px;"></div>
<span class="t" id="t125" style="top:621.0px;font-size:11px;line-height:14px;color:#000;left:36.5px;">3 AWG</span>
<span class="t" id="t126" style="top:621.0px;font-size:11px;line-height:14px;color:#000;left:141.5px;">70</span>
<span class="t" id="t127" style="top:621.0px;font-size:11px;line-height:14px;color:#000;left:254.5px;">8.36</span>
<span class="t" id="t128" style="top:621.0px;font-size:11px;line-height:14px;color:#000;left:365.5px;">0.04</span>
<span class="t" id="t129" style="top:621.0px;font-size:11px;line-height:14px;color:#000;left:473.5px;">0.02</span>
<span class="t" id="t130" style="top:621.0px;font-size:11px;line-height:14px;color:#000;left:581.5px;">-</span>
<span class="t" id="t131" style="top:621.0px;font-size:11px;line-height:14px;color:#000;left:691.5px;">-</span>
<div class="rh" style="left:15px;top:636px;width:19px;height:16px;"></div>
<span class="t" id="t132" style="top:637.0px;font-size:11px;line-height:14px;color:#000;left:36.5px;">2 AWG</span>
<span class="t" id="t133" style="top:637.0px;font-size:11px;line-height:14px;color:#000;left:141.5px;">80.5</span>
<span class="t" id="t134" style="top:637.0px;font-size:11px;line-height:14px;color:#000;left:254.5px;">7.27</span>
<span class="t" id="t135" style="top:637.0px;font-size:11px;line-height:14px;color:#000;left:365.5px;">0.04</span>
<span class="t" id="t136" style="top:637.0px;font-size:11px;line-height:14px;color:#000;left:473.5px;">0.02</span>
<span class="t" id="t137" style="top:637.0px;font-size:11px;line-height:14px;color:#000;left:581.5px;">-</span>
<span class="t" id="t138" style="top:637.0px;font-size:11px;line-height:14px;color:#000;left:691.5px;">-</span>
<div class="rh" style="left:15px;top:652px;width:19px;height:16px;"></div>
<span class="t" id="t139" style="top:653.0px;font-size:11px;line-height:14px;color:#000;left:36.5px;">1 AWG</span>
<span class="t" id="t140" style="top:653.0px;font-size:11px;line-height:14px;color:#000;left:141.5px;">91</span>
<span class="t" id="t141" style="top:653.0px;font-size:11px;line-height:14px;color:#000;left:254.5px;">6.43</span>
<span class="t" id="t142" style="top:653.0px;font-size:11px;line-height:14px;color:#000;left:365.5px;">0.03</span>
<span class="t" id="t143" style="top:653.0px;font-size:11px;line-height:14px;color:#000;left:473.5px;">0.01</span>
<span class="t" id="t144" style="top:653.0px;font-size:11px;line-height:14px;color:#000;left:581.5px;">-</span>
<span class="t" id="t145" style="top:653.0px;font-size:11px;line-height:14px;color:#000;left:691.5px;">-</span>
<div class="rh" style="left:15px;top:668px;width:19px;height:16px;"></div>
<span class="t" id="t146" style="top:669.0px;font-size:11px;line-height:14px;color:#000;left:36.5px;">1-0 AWG</span>
<span class="t" id="t147" style="top:669.0px;font-size:11px;line-height:14px;color:#000;left:141.5px;">105</span>
<span class="t" id="t148" style="top:669.0px;font-size:11px;line-height:14px;color:#000;left:254.5px;">5.57</span>
<span class="t" id="t149" style="top:669.0px;font-size:11px;line-height:14px;color:#000;left:365.5px;">0.02</span>
<span class="t" id="t150" style="top:669.0px;font-size:11px;line-height:14px;color:#000;left:473.5px;">0.01</span>
<span class="t" id="t151" style="top:669.0px;font-size:11px;line-height:14px;color:#000;left:581.5px;">-</span>
<span class="t" id="t152" style="top:669.0px;font-size:11px;line-height:14px;color:#000;left:691.5px;">-</span>
<div class="rh" style="left:15px;top:684px;width:19px;height:16px;"></div>
<span class="t" id="t153" style="top:685.0px;font-size:11px;line-height:14px;color:#000;left:36.5px;">2-0 AWG</span>
<span class="t" id="t154" style="top:685.0px;font-size:11px;line-height:14px;color:#000;left:141.5px;">122.5</span>
<span class="t" id="t155" style="top:685.0px;font-size:11px;line-height:14px;color:#000;left:254.5px;">4.78</span>
<span class="t" id="t156" style="top:685.0px;font-size:11px;line-height:14px;color:#000;left:365.5px;">0.02</span>
<span class="t" id="t157" style="top:685.0px;font-size:11px;line-height:14px;color:#000;left:473.5px;">0.01</span>
<span class="t" id="t158" style="top:685.0px;font-size:11px;line-height:14px;color:#000;left:581.5px;">-</span>
<span class="t" id="t159" style="top:685.0px;font-size:11px;line-height:14px;color:#000;left:691.5px;">-</span>
<div class="sb" style="left:885px;top:487px;width:15px;height:214px;"></div>
<div class="sbt" style="left:886px;top:504px;width:14px;height:85px;"></div>
<svg style="position:absolute;left:890px;top:493px" width="7" height="4" viewBox="0 0 7 4"><path d="M0 4h7L3.500 0z" fill="#444"/></svg>
<svg style="position:absolute;left:890px;top:691px" width="7" height="4" viewBox="0 0 7 4"><path d="M0 0h7L3.500 4z" fill="#444"/></svg>
<svg style="position:absolute;left:889px;top:542px" width="7" height="9" viewBox="0 0 7 9"><path d="M0 .5h7M0 3.500h7M0 6.500h7" stroke="#5a5a5a"/><path d="M0 1.500h7M0 4.500h7M0 7.500h7" stroke="#fafafa"/></svg>
<div class="cb" style="left:14px;top:708px;width:156px;height:21px;"><svg class="ar" width="7" height="4" viewBox="0 0 7 4"><path d="M0 0h7L3.5 4z" fill="#000"/></svg></div>
<span class="t" id="t160" style="top:711.5px;font-size:11px;line-height:14px;color:#000;left:19px;">14 AWG</span>
<span class="t" id="t161" style="top:712.0px;font-size:11px;line-height:14px;color:#000;letter-spacing:0.078px;left:176.5px;">Диаметр провода заземления</span>
<div class="ck" style="left:811px;top:706.5px;width:13px;height:13.0px;"><svg width="13" height="13" viewBox="0 0 13 13"><path d="M3 6.6L5.7 10L9.8 2.8" stroke="#4a5fa3" stroke-width="1.7" fill="none"/></svg></div>
<span class="t" id="t162" style="top:706.0px;font-size:11px;line-height:14px;color:#000;letter-spacing:0.154px;left:827px;">Показать все</span>
<span class="t" id="t163" style="top:747.0px;font-size:11px;line-height:14px;color:#000;letter-spacing:-0.075px;left:14px;">Описание:</span>
<div class="ed" style="left:76px;top:746px;width:240px;height:22px;"></div>
<div class="bt" style="left:326px;top:747px;width:106px;height:21px;"></div>
<div class="t" style="top:750.5px;font-size:11px;line-height:14px;color:#000;letter-spacing:0.070px;left:179.0px;width:400px;text-align:center;"><span id="t164">Сохранить как...</span></div>
<div class="bt bd" style="left:659px;top:747px;width:73px;height:21px;"></div>
<div class="t" style="top:750.5px;font-size:11px;line-height:14px;color:#000;letter-spacing:-0.453px;left:495.5px;width:400px;text-align:center;"><span id="t165">OK</span></div>
<div class="bt" style="left:743px;top:747px;width:73px;height:21px;"></div>
<div class="t" style="top:750.5px;font-size:11px;line-height:14px;color:#000;letter-spacing:-0.078px;left:579.5px;width:400px;text-align:center;"><span id="t166">Отмена</span></div>
<div class="bt" style="left:827px;top:747px;width:73px;height:21px;"></div>
<div class="t" style="top:750.5px;font-size:11px;line-height:14px;color:#000;letter-spacing:-0.022px;left:663.5px;width:400px;text-align:center;"><span id="t167">Справка</span></div>
<svg style="position:absolute;left:0;top:0;pointer-events:none" width="921" height="786" viewBox="0 0 921 786">
<rect x="135.500" y="22.600" width="159.200" height="71.400" fill="none" stroke="#fd0204" stroke-width="3"/>
<path d="M185.900 95V371" stroke="#fd0204" stroke-width="2.900" fill="none"/>
<path d="M178.600 357.300L185.900 372.500L193.200 357.300" stroke="#fd0204" stroke-width="3" fill="none" stroke-linejoin="miter"/>
<rect x="74.500" y="374.400" width="137" height="66" fill="none" stroke="#fd0204" stroke-width="3.200"/>
</svg>
</body></html>
